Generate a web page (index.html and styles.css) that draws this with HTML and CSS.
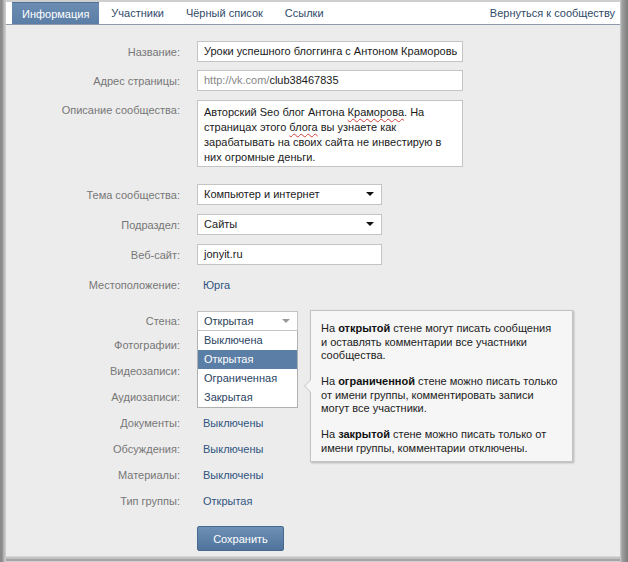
FILE: index.html
```html
<!DOCTYPE html>
<html lang="ru">
<head>
<meta charset="utf-8">
<title>Информация</title>
<link rel="stylesheet" href="styles.css">
</head>
<body>
<div class="frame">
  <div class="window">
    <nav class="tabs">
      <a class="tab active">Информация</a>
      <a class="tab">Участники</a>
      <a class="tab">Чёрный список</a>
      <a class="tab">Ссылки</a>
      <a class="tab back">Вернуться к сообществу</a>
    </nav>
    <div class="form">
      <div class="row r1">
        <div class="label">Название:</div>
        <div class="field wide">Уроки успешного блоггинга с Антоном Краморовь</div>
      </div>
      <div class="row r2">
        <div class="label">Адрес страницы:</div>
        <div class="field wide"><span class="muted">http://vk.com/</span>club38467835</div>
      </div>
      <div class="row r3">
        <div class="label top">Описание сообщества:</div>
        <div class="field area">Авторский Seo блог Антона <span class="spell">Краморова</span>. На страницах этого <span class="spell">блога</span> вы узнаете как зарабатывать на своих сайта не инвестирую в них огромные деньги.</div>
      </div>
      <div class="row r4">
        <div class="label">Тема сообщества:</div>
        <div class="field select">Компьютер и интернет<span class="arrow"></span></div>
      </div>
      <div class="row r5">
        <div class="label">Подраздел:</div>
        <div class="field select">Сайты<span class="arrow"></span></div>
      </div>
      <div class="row r6">
        <div class="label">Веб-сайт:</div>
        <div class="field mid">jonyit.ru</div>
      </div>
      <div class="row text r7">
        <div class="label">Местоположение:</div>
        <div class="value">Юрга</div>
      </div>
      <div class="row r8">
        <div class="label">Стена:</div>
        <div class="dd">
          <div class="field select small">Открытая<span class="arrow light"></span></div>
          <ul class="menu">
            <li>Выключена</li>
            <li class="sel">Открытая</li>
            <li>Ограниченная</li>
            <li>Закрытая</li>
          </ul>
        </div>
      </div>
      <div class="row text">
        <div class="label">Фотографии:</div>
        <div class="value">Открытые</div>
      </div>
      <div class="row text">
        <div class="label">Видеозаписи:</div>
        <div class="value">Открытые</div>
      </div>
      <div class="row text">
        <div class="label">Аудиозаписи:</div>
        <div class="value">Открытые</div>
      </div>
      <div class="row text">
        <div class="label">Документы:</div>
        <div class="value">Выключены</div>
      </div>
      <div class="row text">
        <div class="label">Обсуждения:</div>
        <div class="value">Выключены</div>
      </div>
      <div class="row text">
        <div class="label">Материалы:</div>
        <div class="value">Выключены</div>
      </div>
      <div class="row text">
        <div class="label">Тип группы:</div>
        <div class="value">Открытая</div>
      </div>
      <div class="row btnrow">
        <div></div>
        <div><button class="btn">Сохранить</button></div>
      </div>
    </div>
    <div class="tip">
      <p>На <b>открытой</b> стене могут писать сообщения и оставлять комментарии все участники сообщества.</p>
      <p>На <b>ограниченной</b> стене можно писать только от имени группы, комментировать записи могут все участники.</p>
      <p>На <b>закрытой</b> стене можно писать только от имени группы, комментарии отключены.</p>
    </div>
  </div>
</div>
</body>
</html>
```
FILE: styles.css
```css
* { box-sizing: border-box; }
html, body { margin: 0; padding: 0; }
body {
  font-family: "Liberation Sans", Arial, sans-serif;
  font-size: 11px;
  color: #222;
  background: #9a9a9a;
}
.frame {
  width: 628px;
  height: 562px;
  padding: 2px 8px 6px 6px;
  background: linear-gradient(to right, #8a8a8a 0, #8a8a8a 2px, #b9b9b9 4px, #cfcfcf 6px, #cfcfcf 620px, #a0a0a0 622px, #7d7d7d 628px);
}
.window {
  position: relative;
  height: 554px;
  background: #ececec;
  box-shadow: 0 1px 0 #d8d8d8, 0 3px 0 #c2c2c2, 0 5px 0 #a5a5a5;
}
.tabs {
  display: flex;
  gap: 2px;
  height: 23px;
  padding: 0 5px 0 6px;
  background: #fff;
  border-bottom: 1px solid #8e9aa8;
}
.tab {
  display: flex;
  align-items: center;
  padding: 0 10px;
  color: #2f4a68;
  font-size: 11px;
  white-space: nowrap;
}
.tab.active {
  background: linear-gradient(#6b8db3, #5b7ea6);
  color: #fff;
  border-top: 1px solid #4e6f96;
}
.tab.back { margin-left: auto; padding: 0; }
.form {
  padding-top: 16px;
  display: flex;
  flex-direction: column;
}
.row {
  display: grid;
  grid-template-columns: 174px 1fr;
  column-gap: 17px;
  align-items: center;
  min-height: 21px;
}
.row.text { height: 26px; }
.r1 { margin-bottom: 8px; }
.r2 { margin-bottom: 9px; }
.r3 { margin-bottom: 17px; }
.r4, .r5 { margin-bottom: 9px; }
.r6 { margin-bottom: 7px; }
.r7 { margin-bottom: 12px; }
.r8 { margin-bottom: 1px; }
.label {
  text-align: right;
  color: #777;
  font-size: 11px;
  white-space: nowrap;
}
.label.top { align-self: start; padding-top: 4px; }
.value { color: #2f5580; font-size: 11px; padding-left: 6px; }
.field {
  position: relative;
  height: 21px;
  line-height: 19px;
  padding: 0 6px;
  background: #fff;
  border: 1px solid #c4c4c4;
  font-size: 11px;
  color: #1a1a1a;
  white-space: nowrap;
  overflow: hidden;
}
.field.wide { width: 266px; }
.field.mid, .field.select { width: 185px; }
.field.small { width: 101px; height: 20px; line-height: 18px; color: #2a3f58; }
.muted { color: #888; }
.field.area {
  width: 266px;
  height: 67px;
  white-space: normal;
  line-height: 15px;
  padding: 4px 6px;
}
.spell { text-decoration: underline wavy #d04040; text-decoration-thickness: 1px; text-underline-offset: 2px; }
.arrow {
  position: absolute;
  right: 7px;
  top: 7px;
  width: 0;
  height: 0;
  border-left: 4px solid transparent;
  border-right: 4px solid transparent;
  border-top: 4px solid #111;
}
.arrow.light { border-top-color: #9a9a9a; top: 7px; }
.dd { position: relative; }
.menu {
  position: absolute;
  left: 0;
  top: 20px;
  width: 101px;
  margin: 0;
  padding: 0;
  list-style: none;
  background: #fff;
  border: 1px solid #b0b0b0;
  border-top: none;
  z-index: 2;
}
.menu li {
  height: 19px;
  line-height: 19px;
  padding: 0 6px;
  font-size: 11px;
  color: #2a4463;
}
.menu li.sel { background: #5b7ea6; color: #fff; }
.btnrow { margin-top: 12px; }
.btn {
  width: 87px;
  height: 25px;
  padding: 0;
  border: 1px solid #46698f;
  border-radius: 2px;
  background: linear-gradient(#6e90b6, #4f739c);
  color: #fff;
  font-family: inherit;
  font-size: 11px;
}
.tip {
  position: absolute;
  left: 304px;
  top: 308px;
  width: 263px;
  height: 152px;
  padding: 11px 14px 0 10px;
  background: #f6f6f6;
  border: 1px solid #c3c3c3;
  box-shadow: 1px 1px 2px rgba(0,0,0,0.25);
  font-size: 11px;
  line-height: 13.5px;
  color: #222;
  z-index: 1;
}
.tip p { margin: 0 0 12.5px; }
.tip b { color: #111; }
.tip::before, .tip::after {
  content: "";
  position: absolute;
  top: 68px;
  width: 0;
  height: 0;
  border-top: 7px solid transparent;
  border-bottom: 7px solid transparent;
}
.tip::before { left: -7px; border-right: 7px solid #c3c3c3; }
.tip::after { left: -6px; border-right: 7px solid #f6f6f6; }
```
